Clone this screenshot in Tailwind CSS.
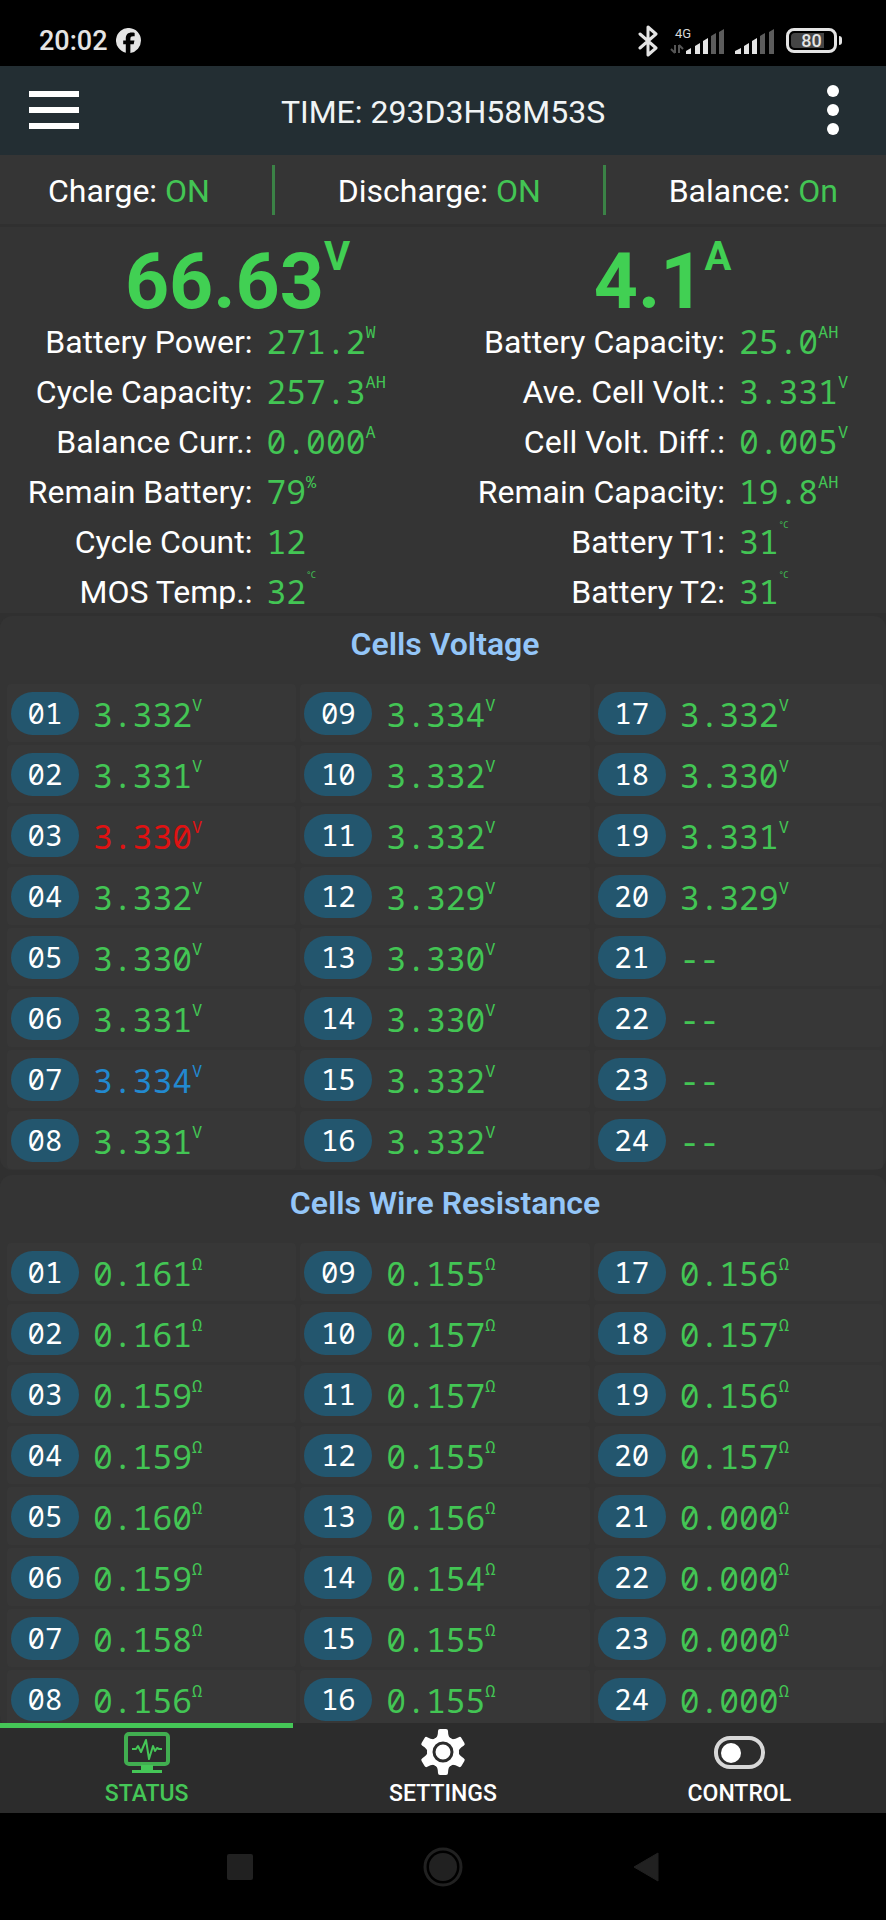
<!DOCTYPE html>
<html lang="en">
<head>
  <meta charset="UTF-8" />
  <title>BMS Status</title>
  <meta name="viewport" content="width=device-width, initial-scale=1.0" />
  <script src="https://cdn.jsdelivr.net/npm/@tailwindcss/browser@4"></script>
</head>
<body class="bg-black text-white font-['Roboto',sans-serif] h-screen flex flex-col overflow-hidden">

  <!-- Phone status bar -->
  <div class="h-[66px] shrink-0 flex items-center justify-between pl-[39px] pr-11 pt-[15px] text-[#e4e4e4]">
    <div class="flex items-center gap-2">
      <span class="text-[27px] leading-8 font-medium">20:02</span>
      <svg class="w-[25px] h-[25px]" viewBox="0 0 24 24" fill="currentColor"><path d="M24 12a12 12 0 1 0-14.6 11.7v-8H6.9V12h2.5v-1.6c0-4.1 1.900-6 5.900-6 .8 0 2.100.1 2.600.3v3.300c-.3 0-.8-.05-1.400-.05-2 0-2.700.7-2.700 2.700V12h3.900l-.7 3.700h-3.200v8.200A12 12 0 0 0 24 12z"/></svg>
    </div>
    <div class="flex items-center">
      <svg class="w-[20px] h-[32px]" viewBox="0 0 20 32" fill="none" stroke="currentColor" stroke-width="3" stroke-linejoin="round" stroke-linecap="round"><path d="M2 9l16 14-8 7V2l8 7L2 23"/></svg>
      <svg class="ml-3 w-[55px] h-[32px]" viewBox="0 0 55 32">
        <text x="5" y="13" font-size="13" fill="#d8d8d8" font-family="Roboto, sans-serif">4G</text>
        <g fill="none" stroke="#555" stroke-width="2"><path d="M5 20v8M1 24l4 4M9 28v-8M9 20l4 4"/></g>
        <g fill="#e4e4e4"><path d="M16 26l5-3v6h-5zM25 21l5-3v11h-5zM33 16l5-3v16h-5z"/></g>
        <g fill="#5c5c5c"><path d="M41 11l5-3v21h-5zM49 7l5-3v25h-5z"/></g>
      </svg>
      <svg class="ml-[10px] w-[40px] h-[32px]" viewBox="0 0 40 32">
        <g fill="#e4e4e4"><path d="M0 26l6-3v6H0zM9 21l5-3v11H9zM17 16l5-3v16h-5z"/></g>
        <g fill="#5c5c5c"><path d="M25 11l5-3v21h-5zM34 7l5-3v25h-5z"/></g>
      </svg>
      <div class="ml-[11px] flex items-center gap-[2px]">
        <div class="w-[51px] h-[25px] rounded-lg border-3 border-[#e4e4e4] p-[2px]">
          <div class="h-full rounded-sm bg-linear-to-r from-[#444] from-80% to-black to-80% flex items-center justify-center text-[18px] leading-4 font-medium">80</div>
        </div>
        <div class="w-[3px] h-[9px] rounded-r bg-[#e4e4e4]"></div>
      </div>
    </div>
  </div>

  <header class="h-[89px] shrink-0 bg-[#232e33] flex items-center justify-between pl-[29px] pr-[47px]">
    <button aria-label="Menu" class="flex flex-col gap-[10px] pb-[2px]">
      <span class="w-[50px] h-[6px] bg-white"></span>
      <span class="w-[50px] h-[6px] bg-white"></span>
      <span class="w-[50px] h-[6px] bg-white"></span>
    </button>
    <h1 class="flex-1 pr-5 pt-[2px] text-center text-[32px] leading-10 text-[#f0f4f5]">TIME: 293D3H58M53S</h1>
    <button aria-label="More" class="flex flex-col gap-[7px] pb-[2px]">
      <span class="size-3 rounded-full bg-white"></span>
      <span class="size-3 rounded-full bg-white"></span>
      <span class="size-3 rounded-full bg-white"></span>
    </button>
  </header>

  <main class="flex-1 min-h-0 overflow-hidden bg-[#303030]">
    <section class="h-[69px] mb-[3px] bg-[#353535] px-12 flex items-center justify-between text-[32px] leading-10">
      <p class="pt-[2px]">Charge: <span class="text-[#43c554]">ON</span></p>
      <div class="w-[3px] h-[50px] bg-[#3b8246]"></div>
      <p class="pt-[2px]">Discharge: <span class="text-[#43c554]">ON</span></p>
      <div class="w-[3px] h-[50px] bg-[#3b8246]"></div>
      <p class="pt-[2px]">Balance: <span class="text-[#43c554]">On</span></p>
    </section>

    <section class="h-[386px] mb-[3px] bg-[#343434] grid grid-cols-2">
      <div>
        <p class="h-[90px] pl-8 text-center text-[77px] leading-[110px] font-bold text-[#41d053]">66.63<sup class="text-[40px] leading-none top-[-38px]">V</sup></p>
        <dl id="stats-left"></dl>
      </div>
      <div>
        <p class="h-[90px] pr-1 text-center text-[77px] leading-[110px] font-bold text-[#41d053]">4.1<sup class="text-[40px] leading-none top-[-38px]">A</sup></p>
        <dl id="stats-right"></dl>
      </div>
    </section>

    <section class="mb-[5px] rounded-xl bg-[#343434] pl-[7px] pr-[3px] pb-px">
      <h2 class="h-[68px] pt-2 text-center text-[32px] leading-10 font-semibold text-[#94c6f8]">Cells Voltage</h2>
      <ol id="voltage" class="grid grid-cols-3 grid-rows-8 grid-flow-col gap-x-1 gap-y-[3px]"></ol>
    </section>

    <section class="rounded-xl bg-[#343434] pl-[7px] pr-[3px]">
      <h2 class="h-[68px] pt-2 text-center text-[32px] leading-10 font-semibold text-[#94c6f8]">Cells Wire Resistance</h2>
      <ol id="resistance" class="grid grid-cols-3 grid-rows-8 grid-flow-col gap-x-1 gap-y-[3px]"></ol>
    </section>
  </main>

  <nav class="h-[90px] shrink-0 bg-[#2c2c2c] grid grid-cols-3 gap-x-[3px] text-[23px] leading-7 font-medium">
    <a href="#status" class="border-t-5 border-[#45c657] text-[#45c657] flex flex-col items-center pt-1">
      <svg class="w-[46px] h-[42px] mb-[6px]" viewBox="0 0 46 42" fill="none" stroke="currentColor">
        <rect x="2" y="2" width="42" height="30" rx="3" stroke-width="4" stroke-opacity=".85"/>
        <path d="M8 17h4l2-3 3 6 5-12 3 19 4-13 2 5 2-3 2 1h3" stroke-width="2" stroke-linejoin="round"/>
        <path d="M17 33h12v5h9v3H8v-3h9z" fill="currentColor" stroke="none"/>
      </svg>
      STATUS
    </a>
    <a href="#settings" class="border-t-5 border-transparent flex flex-col items-center">
      <svg class="w-[46px] h-[48px] mb-1" viewBox="-23 -24 46 48" fill="currentColor">
        <circle r="16"/>
        <g id="teeth">
          <path id="tooth" d="M-8-13q3-2 3-8 0-2 2-2h6q2 0 2 2 0 6 3 8v26q-3 2-3 8 0 2-2 2h-6q-2 0-2-2 0-6-3-8z"/>
          <use href="#tooth" transform="rotate(60)"/>
          <use href="#tooth" transform="rotate(120)"/>
        </g>
        <circle r="9" fill="none" stroke="#2c2c2c" stroke-width="3"/>
      </svg>
      SETTINGS
    </a>
    <a href="#control" class="border-t-5 border-transparent flex flex-col items-center pt-2">
      <svg class="w-[52px] h-[34px] mb-[10px]" viewBox="0 0 52 34">
        <rect x="3" y="2" width="47" height="29" rx="14" fill="none" stroke="#d8d8d8" stroke-width="4"/>
        <circle cx="18" cy="17" r="10" fill="#fff"/>
      </svg>
      CONTROL
    </a>
  </nav>

  <!-- Android buttons -->
  <div class="h-[107px] shrink-0 flex items-center justify-center gap-[170px] text-[#212121]">
    <button aria-label="Recent apps" class="size-[26px] rounded-xs bg-[#212121]"></button>
    <button aria-label="Home"><svg class="size-10" viewBox="0 0 40 40"><circle cx="20" cy="20" r="18" fill="none" stroke="currentColor" stroke-width="3"/><circle cx="20" cy="20" r="14" fill="currentColor"/></svg></button>
    <button aria-label="Back"><svg class="w-[26px] h-[30px]" viewBox="0 0 26 30" fill="currentColor"><path d="M25 1v28L1 15z" stroke="currentColor" stroke-width="1" stroke-linejoin="round"/></svg></button>
  </div>

<script>
  const statsLeft = [
    ["Battery Power:", "271.2", "W"],
    ["Cycle Capacity:", "257.3", "AH"],
    ["Balance Curr.:", "0.000", "A"],
    ["Remain Battery:", "79", "%"],
    ["Cycle Count:", "12", ""],
    ["MOS Temp.:", "32", "℃"],
  ];
  const statsRight = [
    ["Battery Capacity:", "25.0", "AH"],
    ["Ave. Cell Volt.:", "3.331", "V"],
    ["Cell Volt. Diff.:", "0.005", "V"],
    ["Remain Capacity:", "19.8", "AH"],
    ["Battery T1:", "31", "℃"],
    ["Battery T2:", "31", "℃"],
  ];
  const voltage = [
    "3.332", "3.331", "3.330", "3.332", "3.330", "3.331", "3.334", "3.331",
    "3.334", "3.332", "3.332", "3.329", "3.330", "3.330", "3.332", "3.332",
    "3.332", "3.330", "3.331", "3.329", "--", "--", "--", "--",
  ];
  const resistance = [
    "0.161", "0.161", "0.159", "0.159", "0.160", "0.159", "0.158", "0.156",
    "0.155", "0.157", "0.157", "0.155", "0.156", "0.154", "0.155", "0.155",
    "0.156", "0.157", "0.156", "0.157", "0.000", "0.000", "0.000", "0.000",
  ];

  function unitHtml(unit) {
    const size = unit === "℃" ? "text-[9px] top-[-26px]" : "text-[17px] top-[-16px]";
    return `<sup class="${size} leading-none">${unit}</sup>`;
  }

  function renderStats(id, rows, labelWidth) {
    document.getElementById(id).innerHTML = rows.map(([label, value, unit]) => `
      <div class="h-[50px] flex items-center gap-[14px]">
        <dt class="${labelWidth} text-right text-[32px] leading-10 whitespace-nowrap">${label}</dt>
        <dd class="font-['Noto_Sans_Mono','DejaVu_Sans_Mono',monospace] text-[33px] leading-10 text-[#43c554]">${value}${unitHtml(unit)}</dd>
      </div>`).join("");
  }

  function voltageColor(i) {
    if (i === 2) return "text-[#e01212]";
    if (i === 6) return "text-[#2289cf]";
    return "text-[#43c554]";
  }

  function renderCells(id, values, unit, colorOf) {
    document.getElementById(id).innerHTML = values.map((value, i) => `
      <li class="h-[58px] rounded-sm bg-[#373737] flex items-center gap-[14px] pl-1 font-['Noto_Sans_Mono','DejaVu_Sans_Mono',monospace]">
        <span class="w-[68px] h-[43px] rounded-full bg-[#23566e] text-center text-[29px] leading-[42px]">${String(i + 1).padStart(2, "0")}</span>
        <span class="pt-[3px] text-[33px] leading-10 ${colorOf(i)}">${value}${value === "--" ? "" : unitHtml(unit)}</span>
      </li>`).join("");
  }

  renderStats("stats-left", statsLeft, "w-[57%]");
  renderStats("stats-right", statsRight, "w-7/11");
  renderCells("voltage", voltage, "V", voltageColor);
  renderCells("resistance", resistance, "Ω", () => "text-[#43c554]");
</script>

</body>
</html>
